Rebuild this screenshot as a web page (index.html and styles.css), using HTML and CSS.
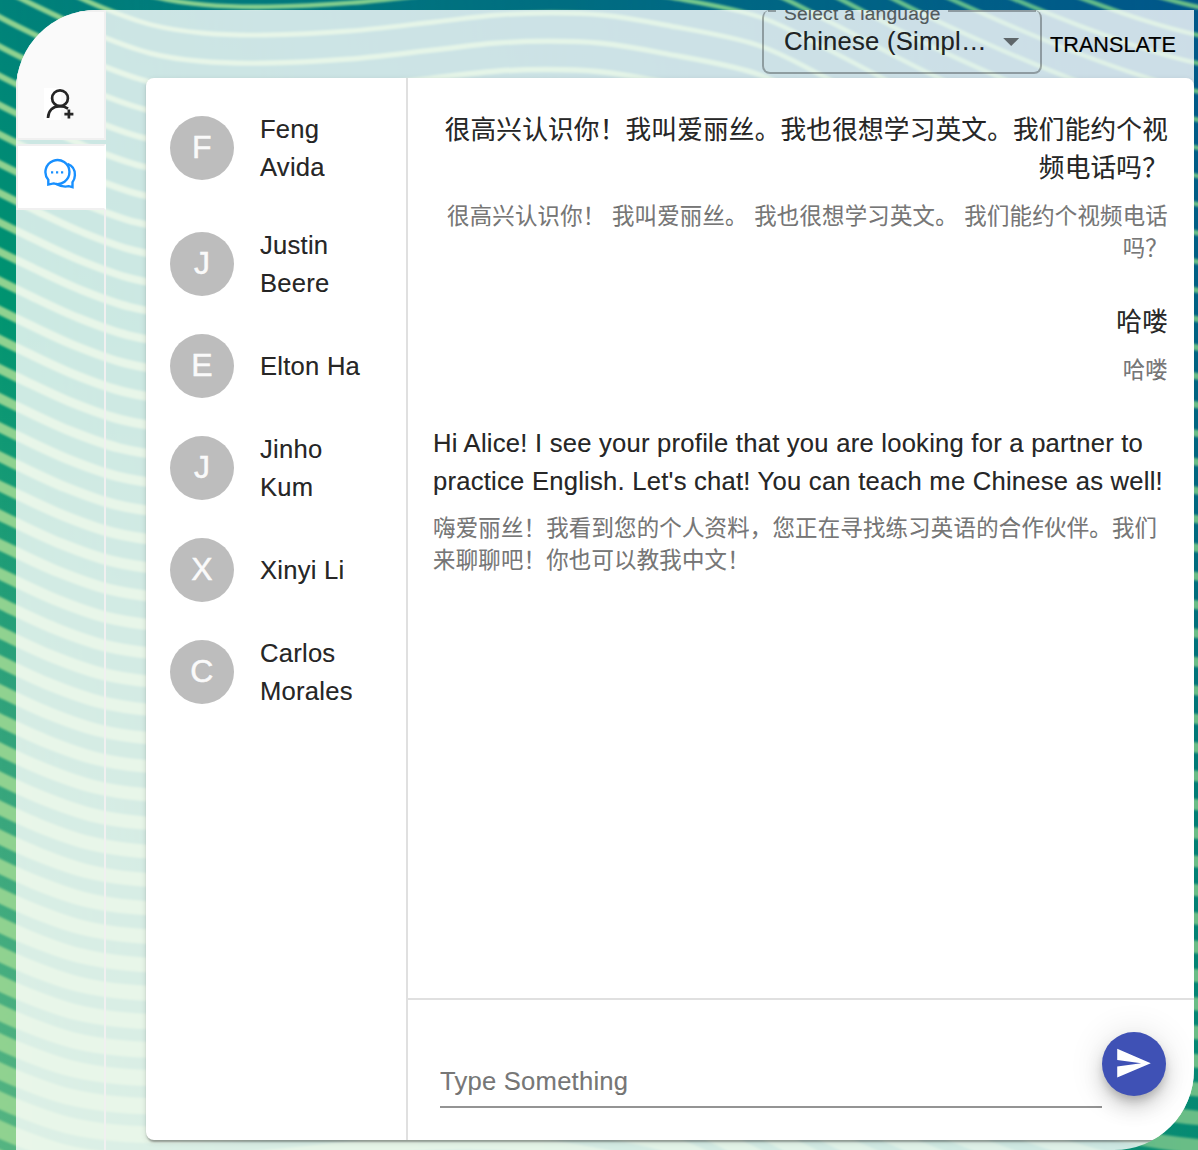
FILE: index.html
```html
<!DOCTYPE html>
<html lang="en">
<head>
<meta charset="utf-8">
<title>Messages</title>
<link rel="stylesheet" href="styles.css">
</head>
<body>
<svg class="backdrop" width="1198" height="1150" viewBox="0 0 1198 1150" aria-hidden="true">
  <defs>
    <linearGradient id="left" x1="0" y1="0" x2="0" y2="1">
      <stop offset="0" stop-color="#00827a"/><stop offset=".26" stop-color="#009470"/>
      <stop offset=".6" stop-color="#2fa27b"/><stop offset="1" stop-color="#55b482"/>
    </linearGradient>
    <linearGradient id="right" x1="0" y1="0" x2="0" y2="1">
      <stop offset="0" stop-color="#00568a"/><stop offset=".45" stop-color="#00677f"/>
      <stop offset=".7" stop-color="#007c74"/><stop offset="1" stop-color="#068b72"/>
    </linearGradient>
    <linearGradient id="fade" x1="0" y1="0" x2="1" y2="0">
      <stop offset="0" stop-color="#fff" stop-opacity="0"/><stop offset="1" stop-color="#fff"/>
    </linearGradient>
    <linearGradient id="line" gradientUnits="userSpaceOnUse" x1="0" y1="0" x2="1198" y2="0">
      <stop offset="0" stop-color="#90d290"/><stop offset=".6" stop-color="#74c78c"/>
      <stop offset=".85" stop-color="#5cb88c"/><stop offset="1" stop-color="#6abd86"/>
    </linearGradient>
    <mask id="toRight"><rect width="1198" height="1150" fill="url(#fade)"/></mask>
    <filter id="soft"><feGaussianBlur stdDeviation="1.3"/></filter>
  </defs>
  <rect width="1198" height="1150" fill="url(#left)"/>
  <rect width="1198" height="1150" fill="url(#right)" mask="url(#toRight)"/>
  <g id="waves" fill="none" stroke="url(#line)" filter="url(#soft)"></g>
</svg>

<main class="app">
  <nav class="tabs">
    <div class="tab tab-first">
      <svg class="tab-icon" width="34" height="34" viewBox="43 87 34 34" fill="none" stroke="#262626" stroke-width="2.7">
        <path d="M44 88h17v32H44z" fill="#fff" stroke="none"/>
        <circle cx="60" cy="98.200" r="7.900"/>
        <path d="M48 118C48.300 110.500 53 106.200 60 106.200c3.200 0 5.600.7 8 2.400M68.900 109.600v9M64.400 114.100h9"/>
      </svg>
    </div>
    <div class="tab tab-active">
      <svg class="tab-icon" width="34" height="34" viewBox="43 157 34 34" fill="none" stroke="#1890ff" stroke-width="2.400" stroke-linejoin="miter">
        <path d="M48.300 184.600V179.800A12 12 0 1 1 53.600 183.400Z"/>
        <path d="M67.500 163.900C72.500 165.700 75.100 170 74.900 175.200C74.800 178.300 74 180.300 72.500 182.300V187.200L68.800 186.200C64.500 187.200 60.500 186.500 55.500 183.800"/>
        <path d="M51 172.300h2.200M56 172.300h2.200M61 172.300h2.200" stroke-width="2.200"/>
      </svg>
    </div>
    <div class="tabs-rest"></div>
  </nav>

  <section class="content">
    <header class="toolbar">
      <div class="select">
        <span class="select-label">Select a language</span>
        <span class="select-value">Chinese (Simpl…</span>
        <svg class="select-arrow" width="38.400" height="38.400" viewBox="0 0 24 24"><path d="M7 10l5 5 5-5z"/></svg>
      </div>
      <button class="translate">TRANSLATE</button>
    </header>

    <div class="card">
      <ul class="contacts">
        <li class="contact"><span class="avatar">F</span><span>Feng<br>Avida</span></li>
        <li class="contact"><span class="avatar">J</span><span>Justin<br>Beere</span></li>
        <li class="contact"><span class="avatar">E</span><span>Elton Ha</span></li>
        <li class="contact"><span class="avatar">J</span><span>Jinho<br>Kum</span></li>
        <li class="contact"><span class="avatar">X</span><span>Xinyi Li</span></li>
        <li class="contact"><span class="avatar">C</span><span>Carlos<br>Morales</span></li>
      </ul>
      <div class="chat">
        <div class="messages">
          <div class="message mine">
            <p class="text" lang="zh-CN">很高兴认识你！我叫爱丽丝。我也很想学习英文。我们能约个视<br>频电话吗？</p>
            <p class="translation" lang="zh-CN">很高兴认识你！ 我叫爱丽丝。 我也很想学习英文。 我们能约个视频电话<br>吗？</p>
          </div>
          <div class="message mine">
            <p class="text" lang="zh-CN">哈喽</p>
            <p class="translation" lang="zh-CN">哈喽</p>
          </div>
          <div class="message theirs">
            <p class="text">Hi Alice! I see your profile that you are looking for a partner to<br>practice English. Let's chat! You can teach me Chinese as well!</p>
            <p class="translation" lang="zh-CN">嗨爱丽丝！我看到您的个人资料，您正在寻找练习英语的合作伙伴。我们<br>来聊聊吧！你也可以教我中文！</p>
          </div>
        </div>
        <div class="composer">
          <div class="field">Type Something</div>
          <button class="send" aria-label="Send">
            <svg width="38.400" height="38.400" viewBox="0 0 24 24" fill="#fff"><path d="M2.010 21L23 12 2.010 3 2 10l15 2-15 2z"/></svg>
          </button>
        </div>
      </div>
    </div>
  </section>
</main>
<script src="waves.js"></script>
</body>
</html>
```
FILE: styles.css
```css
* { box-sizing: border-box; }
body {
  margin: 0;
  height: 1150px;
  overflow: hidden;
  font-family: "Liberation Sans", "Noto Sans CJK SC", sans-serif;
  font-size: 25.6px;
  line-height: 38px;
  letter-spacing: .24px;
  color: rgba(0, 0, 0, .87);
  text-spacing-trim: space-all;
  -webkit-text-stroke: .2px currentColor;
}
p, ul { margin: 0; padding: 0; }
button { border: 0; padding: 0; font-family: inherit; }
.backdrop { position: absolute; top: 0; left: 0; z-index: -1; }

.app {
  display: flex;
  width: 1178px;
  height: 1140px;
  margin: 10px 0 0 16px;
  background: rgba(255, 255, 255, .8);
  border-radius: 80px 0 80px 0;
  overflow: hidden;
}

.tabs { display: flex; flex-direction: column; width: 90px; flex: none; }
.tab { display: flex; justify-content: center; border: 2px solid #f0f0f0; }
.tab-first { height: 130px; margin-bottom: 4px; padding: 75px 2px 0 0; background: #fafafa; }
.tab-active { height: 66px; padding: 11px 2px 0 0; background: #fff; border-right-color: #fff; }
.tabs-rest { flex: 1; border-right: 2px solid #f0f0f0; }
.tab-icon { display: block; flex: none; }

.content { flex: 1; display: flex; flex-direction: column; padding-left: 40px; }
.toolbar { display: flex; justify-content: flex-end; height: 68px; flex: none; padding-right: 18px; }
.select {
  position: relative;
  display: flex;
  align-items: center;
  justify-content: space-between;
  width: 280px;
  height: 64px;
  padding: 0 10px 0 22px;
  border: 2px solid rgba(0, 0, 0, .3);
  border-top: 0;
  border-radius: 8px;
  margin-right: 8px;
}
.select::before, .select::after {
  content: "";
  position: absolute;
  top: 0;
  height: 2px;
  background: rgba(0, 0, 0, .3);
}
.select::before { left: 4px; width: 8px; }
.select::after { right: 4px; width: 88px; }
.select-label {
  position: absolute;
  top: -9px;
  left: 20px;
  font-size: 19.2px;
  line-height: 26px;
  letter-spacing: .18px;
  color: rgba(0, 0, 0, .6);
  white-space: nowrap;
}
.select-value { white-space: nowrap; margin-left: -2px; }
.select-arrow { flex: none; fill: rgba(0, 0, 0, .54); }
.translate {
  width: 126px;
  background: none;
  font-size: 21.6px;
  letter-spacing: .05px;
  line-height: 38px;
  height: 70px;
  color: #000;
  white-space: nowrap;
}

.card {
  display: flex;
  width: 1048px;
  height: 1062px;
  background: #fff;
  border-radius: 8px;
  box-shadow: 0 4px 2px -2px rgba(0, 0, 0, .2), 0 2px 2px rgba(0, 0, 0, .14), 0 2px 6px rgba(0, 0, 0, .12);
}
.contacts { width: 262px; padding: 19px 0 0 24px; border-right: 2px solid #e0e0e0; list-style: none; }
.contact { display: flex; align-items: center; height: 102px; gap: 26px; }
.contact:first-child { margin-bottom: 14px; }
.avatar {
  display: flex;
  align-items: center;
  justify-content: center;
  width: 64px;
  height: 64px;
  padding-bottom: 2px;
  border-radius: 50%;
  background: #bdbdbd;
  color: #fafafa;
  font-size: 32px;
  -webkit-text-stroke-width: .5px;
}

.chat { flex: 1; display: flex; flex-direction: column; }
.messages { flex: 1; padding: 33px 26px 0 25px; }
.message { margin-bottom: 38px; white-space: nowrap; }
.mine { text-align: right; }
.theirs { margin-top: -1px; }
.mine + .theirs { margin-top: 0; }
.mine + .mine { margin-bottom: 37px; }
.translation {
  margin-top: 13px;
  font-size: 22.4px;
  line-height: 32px;
  color: rgba(0, 0, 0, .54);
}
.mine .translation { margin-top: 14px; }
.composer {
  display: flex;
  height: 142px;
  padding: 32px 28px 0 32px;
  border-top: 2px solid #e0e0e0;
}
.field {
  flex: 1;
  height: 76px;
  padding-top: 30px;
  border-bottom: 2px solid #949494;
  color: rgba(0, 0, 0, .54);
}
.send {
  display: flex;
  align-items: center;
  justify-content: center;
  width: 64px;
  height: 64px;
  padding: 0 2px 2px 0;
  border-radius: 50%;
  background: #3f51b5;
  box-shadow: 0 6px 10px -2px rgba(0, 0, 0, .2), 0 12px 20px rgba(0, 0, 0, .14), 0 2px 36px rgba(0, 0, 0, .12);
}
```
FILE: waves.js
```js
// One wave profile, repeated down the page; lines drift left and thicken as they descend.
const profile = [[-80, -124], [0, -78], [60, -48], [106, -27], [155, -10], [205, -2], [268, 0],
  [352, -4], [437, -13], [500, -20], [554, -22], [605, -20], [668, -10], [760, 10], [833, 45],
  [940, 100], [1080, 160], [1200, 198], [1320, 212], [1450, 205]];
const group = document.getElementById("waves");
for (let k = -9; k < 52; k++) {
  const base = 35 + k * 28.2;
  const t = Math.max(0, base) / 1150;
  const pts = profile.map(([x, y]) => [x - t * 90, base + y]);
  let d = `M${pts[0]}`;
  for (let i = 0; i < pts.length - 1; i++) {
    const a = pts[i - 1] || pts[i], b = pts[i], c = pts[i + 1], e = pts[i + 2] || c;
    d += `C${b[0] + (c[0] - a[0]) / 6} ${b[1] + (c[1] - a[1]) / 6} ${c[0] - (e[0] - b[0]) / 6} ${c[1] - (e[1] - b[1]) / 6} ${c[0]} ${c[1]}`;
  }
  const path = document.createElementNS("http://www.w3.org/2000/svg", "path");
  path.setAttribute("d", d);
  path.setAttribute("stroke-width", 4.5 + t * 12.5);
  group.appendChild(path);
}
```
